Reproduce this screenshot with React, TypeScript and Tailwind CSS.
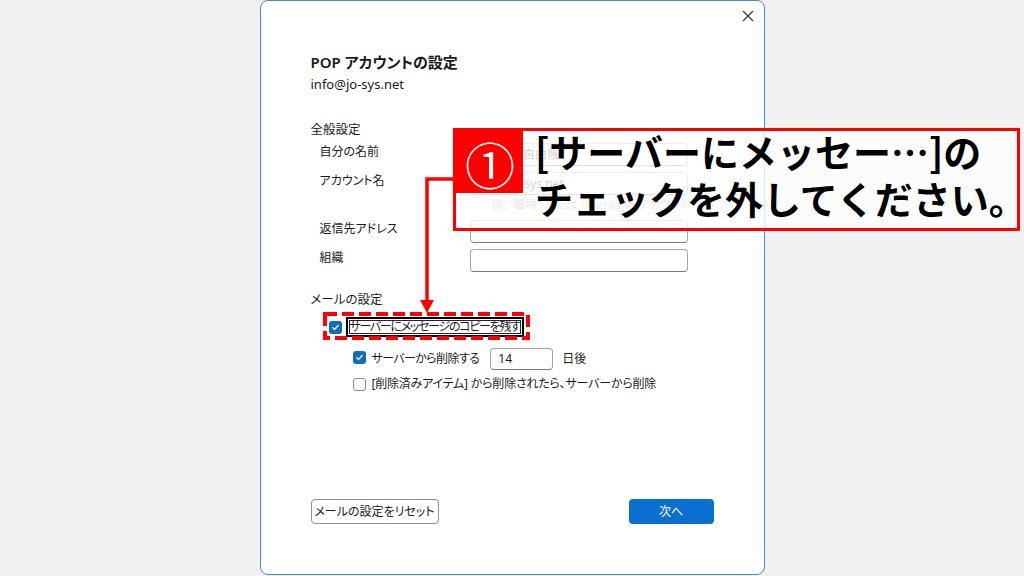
import React from "react";

const ui = "font-['Noto_Sans','Noto_Sans_CJK_JP',sans-serif] [font-feature-settings:'palt']";

function Check({ checked }: { checked?: boolean }) {
  if (!checked) {
    return <span className="size-[13px] shrink-0 rounded-[3px] border border-[#8a8a8a] bg-white" />;
  }
  return (
    <span className="flex size-[13px] shrink-0 items-center justify-center rounded-[3px] bg-[#0f6cbd]">
      <svg width="9" height="9" viewBox="0 0 10 10" fill="none" stroke="white" strokeWidth="1.5" strokeLinecap="round" strokeLinejoin="round">
        <path d="M2 5.3l2 2 4-4.5" />
      </svg>
    </span>
  );
}

function Field({ label, value, className }: { label: string; value?: string; className?: string }) {
  return (
    <div className={`flex h-[23px] ${className ?? ""}`}>
      <span className="w-[159px] pl-[9px] text-[12px] leading-[18px] text-[#1b1b1b]">{label}</span>
      <div className="h-[23px] w-[218px] rounded-[4px] border border-[#a3a3a3] border-b-[#7a7a7a] bg-white px-[7px] text-[12px] leading-[21px] text-[#1b1b1b]">
        {value}
      </div>
    </div>
  );
}

export default function App() {
  return (
    <div className={`relative flex h-[576px] w-full justify-center overflow-hidden bg-[#f1f1f1] ${ui}`}>
      {/* dialog */}
      <div className="flex h-[575px] w-[505px] flex-col rounded-[8px] border-[1.5px] border-[#3c8ce2] bg-white">
        <div className="flex justify-end pr-[10px] pt-[9px]">
          <svg width="12" height="12" viewBox="0 0 12 12" stroke="#333" strokeWidth="1.2" strokeLinecap="round">
            <path d="M1.5 1.5l9 9M10.5 1.5l-9 9" />
          </svg>
        </div>

        <div className="flex flex-1 flex-col px-[50px]">
          <h1 className="mt-[30px] text-[15px] font-semibold leading-[20px] text-[#1b1b1b]">POP アカウントの設定</h1>
          <p className="mt-[3px] text-[13px] leading-[18px] text-[#1b1b1b]">info@jo-sys.net</p>

          <p className="mt-[28px] text-[12.5px] leading-[18px] text-[#1b1b1b]">全般設定</p>
          <div className="mt-[4px] flex flex-col">
            <Field label="自分の名前" value="情シスの自由帳" />
            <Field label="アカウント名" value="info@jo-sys.net" className="mt-[6px]" />
            <p className="mt-[2px] pl-[181px] text-[11.5px] leading-[16px] text-[#8a8a8a]">例: "職場" または "Microsoft アカウント"</p>
            <Field label="返信先アドレス" className="mt-[7px]" />
            <Field label="組織" className="mt-[6px]" />
          </div>

          <p className="mt-[19px] text-[12.5px] leading-[18px] text-[#1b1b1b]">メールの設定</p>
          <div className="ml-[18px] mt-[8px] flex h-[20px] items-center">
            <Check checked />
            <span className="ml-[4px] flex h-[20px] items-center border-2 border-black px-[2px] text-[12px] tracking-[-1.3px] text-[#1b1b1b] shadow-[inset_0_0_0_1px_#fff,inset_0_0_0_2px_#222]">
              サーバーにメッセージのコピーを残す
            </span>
          </div>
          <div className="ml-[42px] mt-[11px] flex h-[22px] items-center">
            <span className="-translate-y-[2px]">
              <Check checked />
            </span>
            <span className="ml-[6px] text-[12px] tracking-[-0.6px] text-[#1b1b1b]">サーバーから削除する</span>
            <div className="ml-[11px] h-[22px] w-[63px] rounded-[4px] border border-[#a3a3a3] border-b-[#7a7a7a] pl-[7px] text-[12px] leading-[20px] text-[#1b1b1b]">
              14
            </div>
            <span className="ml-[9px] text-[12px] text-[#1b1b1b]">日後</span>
          </div>
          <div className="ml-[42px] mt-[5px] flex h-[18px] items-center">
            <Check />
            <span className="ml-[6px] text-[12px] tracking-[-0.2px] text-[#1b1b1b]">[削除済みアイテム] から削除されたら、サーバーから削除</span>
          </div>

          <div className="mb-[50px] mt-auto flex items-center justify-between">
            <button className="h-[25px] w-[128px] rounded-[4px] border border-[#8f8f8f] bg-white text-[12px] text-[#1b1b1b]">
              メールの設定をリセット
            </button>
            <button className="h-[25px] w-[85px] rounded-[4px] bg-[#0b6fd0] text-[12px] text-white">次へ</button>
          </div>
        </div>
      </div>

      {/* annotation: connector arrow + dashed highlight */}
      <svg className="pointer-events-none absolute left-0 top-0" width="1024" height="576">
        <polyline points="455,179 427,179 427,302" fill="none" stroke="#ff0000" strokeWidth="3.5" />
        <polygon points="420,300 434,300 427,313" fill="#ff0000" />
        <rect x="325" y="314" width="203" height="24" fill="none" stroke="#ff0000" strokeWidth="4" strokeDasharray="12 5" />
      </svg>

      {/* callout */}
      <div className="absolute left-[453px] top-[128px] h-[103px] w-[567px] overflow-hidden border-[3px] border-[#ff0000] bg-white/80 font-['Noto_Sans_CJK_JP',sans-serif] [font-feature-settings:normal]">
        <div className="absolute left-0 top-0 flex h-[62px] w-[67px] items-center justify-center bg-[#ff0000] pl-[3px] pt-[3px]">
          <span className="-translate-x-[1px] -translate-y-[1px] text-[50px] leading-none text-white">①</span>
        </div>
        <div className="-mt-[4px] flex flex-col whitespace-nowrap pl-[79px] text-[38px] font-bold leading-[47px] text-black">
          <span>[サーバーにメッセー…]の</span>
          <span>チェックを外してください。</span>
        </div>
      </div>
    </div>
  );
}
